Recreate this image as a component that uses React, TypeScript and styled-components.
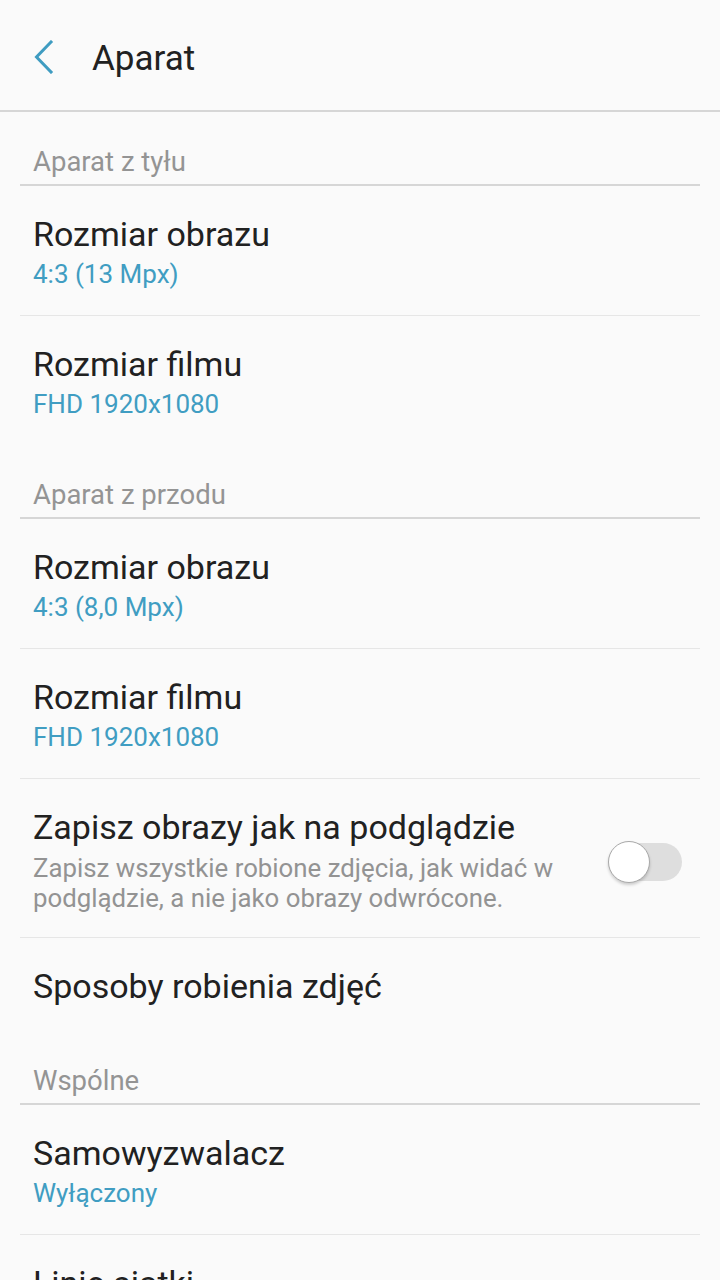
import styled, { createGlobalStyle } from 'styled-components'

type Item = {
  title: string
  value?: string
  description?: string
  toggle?: boolean
}

type Section = {
  heading: string
  items: Item[]
}

const sections: Section[] = [
  {
    heading: 'Aparat z tyłu',
    items: [
      { title: 'Rozmiar obrazu', value: '4:3 (13 Mpx)' },
      { title: 'Rozmiar filmu', value: 'FHD 1920x1080' },
    ],
  },
  {
    heading: 'Aparat z przodu',
    items: [
      { title: 'Rozmiar obrazu', value: '4:3 (8,0 Mpx)' },
      { title: 'Rozmiar filmu', value: 'FHD 1920x1080' },
      {
        title: 'Zapisz obrazy jak na podglądzie',
        description:
          'Zapisz wszystkie robione zdjęcia, jak widać w podglądzie, a nie jako obrazy odwrócone.',
        toggle: true,
      },
      { title: 'Sposoby robienia zdjęć' },
    ],
  },
  {
    heading: 'Wspólne',
    items: [
      { title: 'Samowyzwalacz', value: 'Wyłączony' },
      { title: 'Linie siatki' },
    ],
  },
]

export default function App() {
  return (
    <>
      <GlobalStyle />
      <Screen>
        <Header>
          <BackButton aria-label="Wstecz">
            <svg width="20" height="34" viewBox="0 0 20 34">
              <path
                d="M17 2 L2.5 17 L17 32"
                fill="none"
                stroke="#3f9cc1"
                strokeWidth="3"
                strokeLinecap="square"
              />
            </svg>
          </BackButton>
          <Title>Aparat</Title>
        </Header>
        {sections.map(section => (
          <Group key={section.heading}>
            <GroupHeading>{section.heading}</GroupHeading>
            <List>
              {section.items.map((item, i) => (
                <Row key={item.title + i}>
                  <RowText>
                    <RowTitle>{item.title}</RowTitle>
                    {item.value && <RowValue>{item.value}</RowValue>}
                    {item.description && <RowDescription>{item.description}</RowDescription>}
                  </RowText>
                  {item.toggle && (
                    <Switch>
                      <Knob />
                    </Switch>
                  )}
                </Row>
              ))}
            </List>
          </Group>
        ))}
      </Screen>
    </>
  )
}

const GlobalStyle = createGlobalStyle`
  html, body {
    margin: 0;
    padding: 0;
    background: #fafafa;
  }
  body {
    font-family: Roboto, 'Noto Sans', sans-serif;
    -webkit-font-smoothing: antialiased;
  }
`

const Screen = styled.div`
  width: 720px;
  height: 1280px;
  overflow: hidden;
  background: #fafafa;
`

const Header = styled.header`
  display: flex;
  align-items: center;
  height: 112px;
  padding-top: 8px;
  box-sizing: border-box;
  border-bottom: 2px solid #d6d6d6;
`

const BackButton = styled.div`
  display: flex;
  align-items: center;
  margin-left: 34px;
  margin-top: -4px;
  width: 59px;
  height: 34px;
`

const Title = styled.h1`
  margin: 0;
  margin-left: -1px;
  font-size: 35px;
  font-weight: 400;
  line-height: 42px;
  color: #212121;
`

const Group = styled.section`
  margin: 0 20px;
`

const GroupHeading = styled.div`
  padding: 33px 13px 5px;
  font-size: 27.5px;
  line-height: 34px;
  color: #949494;
  border-bottom: 2px solid #d6d6d6;
`

const List = styled.div`
  display: flex;
  flex-direction: column;
`

const Row = styled.div`
  display: flex;
  align-items: center;
  padding: 27px 18px 24px 13px;

  &:not(:last-child) {
    border-bottom: 1px solid #e6e6e6;
  }
`

const RowText = styled.div`
  flex: 1;
  display: flex;
  flex-direction: column;
`

const RowTitle = styled.div`
  font-size: 34px;
  line-height: 42px;
  color: #212121;
`

const RowValue = styled.div`
  margin-top: 2px;
  font-size: 26px;
  line-height: 34px;
  color: #409dc2;
`

const RowDescription = styled.div`
  margin-top: 5px;
  font-size: 25.8px;
  line-height: 30px;
  color: #939393;
`

const Switch = styled.div`
  position: relative;
  flex: none;
  width: 68px;
  height: 38px;
  margin-left: 12px;
  margin-top: 4px;
  border-radius: 19px;
  background: #dedede;
`

const Knob = styled.span`
  position: absolute;
  left: -6px;
  top: -2px;
  width: 40px;
  height: 40px;
  border-radius: 50%;
  background: #ffffff;
  border: 1px solid #a9a9a9;
  box-shadow: 0 2px 3px rgba(0, 0, 0, 0.18);
`
